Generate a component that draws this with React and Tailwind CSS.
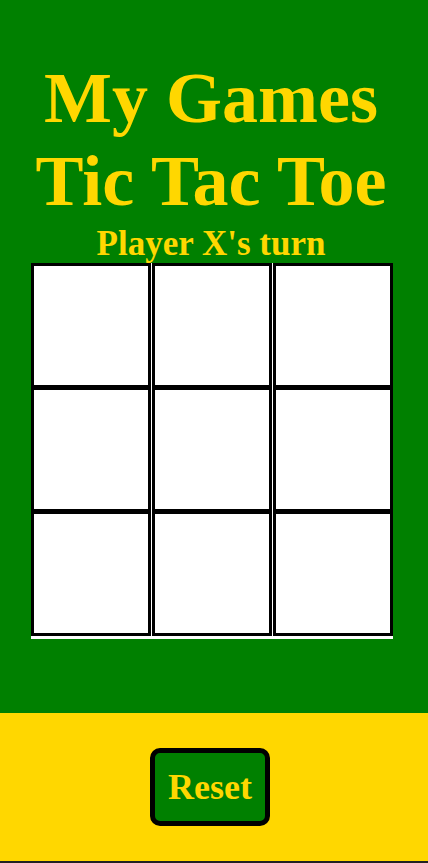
export default function App() {
  const cells = [0, 1, 2];
  return (
    <div className="w-[428px] h-[863px] flex flex-col" style={{ fontFamily: '"Liberation Serif", "Times New Roman", serif' }}>
      <div className="h-[713px] bg-[#008000] flex flex-col items-center pr-[6px] pt-[57px]">
        <h1 className="text-[72px] leading-[normal] font-bold text-[#FFD700] text-center">
          My Games
          <br />
          Tic Tac Toe
        </h1>
        <div className="mt-[1px] text-[35px] leading-[normal] font-bold text-[#FFD700]">Player X's turn</div>
        <div className="-mt-[1px] w-[362px] bg-white pb-[3px] ml-[2px]">
          {cells.map((r) => (
            <div key={r} className={r === 0 ? "flex gap-[1px]" : "flex gap-[1px] -mt-[1px]"}>
              {cells.map((c) => (
                <div key={c} className="w-[120px] h-[125px] border-[3px] border-black bg-white" />
              ))}
            </div>
          ))}
        </div>
      </div>
      <div className="flex-1 bg-[#FFD700] flex items-center justify-center pr-[8px] border-b-[2px] border-[#222]">
        <button className="w-[120px] h-[78px] border-[5px] border-black rounded-[10px] bg-[#008000] text-[#FFD700] text-[36px] font-bold leading-none">
          Reset
        </button>
      </div>
    </div>
  );
}
